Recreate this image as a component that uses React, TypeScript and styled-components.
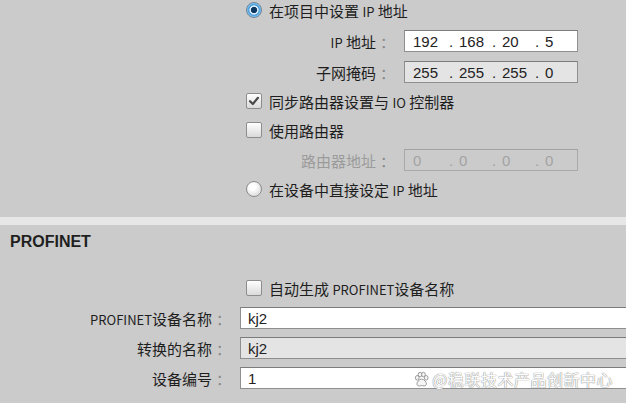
import styled, { createGlobalStyle } from "styled-components";

const GlobalStyle = createGlobalStyle`
  html, body {
    margin: 0;
    padding: 0;
    background: #cbcbcb;
    overflow: hidden;
  }
  body {
    font-family: "Noto Sans CJK SC", "Liberation Sans", sans-serif;
    font-size: 15px;
    color: #1e1e1e;
  }
`;

const Page = styled.div`
  position: relative;
  width: 626px;
  height: 403px;
  overflow: hidden;
  background: #cbcbcb;
`;

const AddressSection = styled.div`
  display: flex;
  flex-direction: column;
  margin-top: -5px;
  padding-bottom: 14px;
`;

const Row = styled.div<{ $h: number }>`
  display: flex;
  align-items: center;
  height: ${(p) => p.$h}px;
`;

const OptionRow = styled(Row)<{ $indent: number }>`
  padding-left: ${(p) => p.$indent}px;
  gap: 7px;
`;

const FieldRow = styled.div<{ $h: number; $label: number; $input: string }>`
  display: grid;
  grid-template-columns: ${(p) => p.$label}px ${(p) => p.$input};
  column-gap: 10px;
  align-items: center;
  height: ${(p) => p.$h}px;
`;

const Label = styled.div<{ $muted?: boolean }>`
  text-align: right;
  white-space: nowrap;
  color: ${(p) => (p.$muted ? "#9b9b9b" : "#1e1e1e")};
`;

const Colon = styled.span`
  display: inline-block;
  width: 14px;
  margin-left: 4px;
  text-align: left;
  color: #8a8a8a;
`;

const Latin = styled.span`
  font-size: 13px;
`;

const Radio = styled.span<{ $on?: boolean }>`
  box-sizing: border-box;
  width: 16px;
  height: 16px;
  border-radius: 50%;
  border: 1px solid ${(p) => (p.$on ? "#6d8499" : "#8c8c8c")};
  background: ${(p) =>
    p.$on
      ? "radial-gradient(circle at 50% 50%, #0c3963 0 2.8px, #e8f4ff 3.6px 4.2px, #3f97d9 5px, #8cc8f0 7px)"
      : "radial-gradient(circle at 40% 35%, #ffffff 0 3px, #e4e4e4 8px)"};
  flex: none;
`;

const Check = styled.span`
  box-sizing: border-box;
  width: 16px;
  height: 16px;
  border-radius: 2px;
  border: 1px solid #8d8d8d;
  background: linear-gradient(#ffffff, #dadada);
  display: flex;
  align-items: center;
  justify-content: center;
  flex: none;
`;

const Box = styled.div<{ $tone: "white" | "gray" | "off"; $bleed?: boolean }>`
  box-sizing: border-box;
  height: 22px;
  border: 1px solid ${(p) => (p.$tone === "off" ? "#a9a9a9" : "#8f8f8f")};
  border-top-color: ${(p) => (p.$tone === "off" ? "#a2a2a2" : "#7c7c7c")};
  background: ${(p) =>
    p.$tone === "white" ? "#ffffff" : p.$tone === "gray" ? "#e4e4e4" : "transparent"};
  color: ${(p) => (p.$tone === "off" ? "#a3a3a3" : "#222")};
  font-family: "Liberation Sans", "Noto Sans CJK SC", sans-serif;
  font-size: 15px;
  display: flex;
  align-items: center;
  padding-left: 7px;
  margin-right: ${(p) => (p.$bleed ? "-6px" : "0")};
`;

const IpBox = styled(Box)`
  display: grid;
  grid-template-columns: repeat(4, 1fr);
  padding-left: 0;
`;

const Octet = styled.span<{ $first?: boolean }>`
  display: flex;
  padding-left: ${(p) => (p.$first ? "8px" : "1px")};
  white-space: pre;
`;

const Dot = styled.span`
  width: 10px;
`;

const Band = styled.div`
  height: 8px;
  background: #e7e7e7;
`;

const SectionTitle = styled.div`
  height: 34px;
  display: flex;
  align-items: center;
  padding-left: 10px;
  font-family: "Liberation Sans", sans-serif;
  font-weight: 700;
  font-size: 16px;
  color: #1f1f1f;
`;

const NameSection = styled.div`
  display: flex;
  flex-direction: column;
  padding-top: 14px;
`;

const Watermark = styled.div`
  position: absolute;
  right: 13px;
  bottom: 12px;
  display: flex;
  align-items: center;
  gap: 2px;
  font-size: 16px;
  color: #fdfdfd;
  letter-spacing: 0.5px;
  text-shadow: 0 0 1px #8a8a8a, 0 0 1px #8a8a8a;
`;

const CheckMark = () => (
  <svg width="12" height="12" viewBox="0 0 12 12">
    <path d="M2 6.2 L4.8 9 L10 2.8" fill="none" stroke="#4a4a4a" strokeWidth="2.2" strokeLinecap="round" strokeLinejoin="round" />
  </svg>
);

const Paw = () => (
  <svg width="17" height="17" viewBox="0 0 20 20">
    <g fill="#f6f6f6" stroke="#8a8a8a" strokeWidth="1">
      <ellipse cx="5" cy="8" rx="2.2" ry="2.7" />
      <ellipse cx="8.3" cy="4.2" rx="2.2" ry="2.7" />
      <ellipse cx="12.3" cy="4.2" rx="2.2" ry="2.7" />
      <ellipse cx="15.5" cy="8" rx="2.2" ry="2.7" />
      <path d="M10.2 9.5c-3 0-5.6 3.6-5.6 5.7 0 1.6 1.3 2.4 2.7 2.4 1.2 0 1.9-.6 2.9-.6s1.7.6 2.9.6c1.4 0 2.7-.8 2.7-2.4 0-2.1-2.6-5.7-5.6-5.7z" />
    </g>
  </svg>
);

const IpField = ({ parts, tone }: { parts: string[]; tone: "white" | "gray" | "off" }) => (
  <IpBox $tone={tone}>
    {parts.map((v, i) => (
      <Octet key={i} $first={i === 0}>
        {i > 0 && <Dot>.</Dot>}
        {v}
      </Octet>
    ))}
  </IpBox>
);

export default function App() {
  return (
    <Page>
      <GlobalStyle />
      <AddressSection>
        <OptionRow $h={30} $indent={246}>
          <Radio $on />
          <span>在项目中设置 <Latin>IP</Latin> 地址</span>
        </OptionRow>
        <FieldRow $h={32} $label={394} $input="174px">
          <Label>
            <Latin>IP</Latin> 地址<Colon>：</Colon>
          </Label>
          <IpField parts={["192", "168", "20", "5"]} tone="white" />
        </FieldRow>
        <FieldRow $h={30} $label={394} $input="174px">
          <Label>
            子网掩码<Colon>：</Colon>
          </Label>
          <IpField parts={["255", "255", "255", "0"]} tone="gray" />
        </FieldRow>
        <OptionRow $h={28} $indent={246}>
          <Check>
            <CheckMark />
          </Check>
          <span>同步路由器设置与 <Latin>IO</Latin> 控制器</span>
        </OptionRow>
        <OptionRow $h={30} $indent={246}>
          <Check />
          <span>使用路由器</span>
        </OptionRow>
        <FieldRow $h={30} $label={394} $input="174px">
          <Label $muted>
            路由器地址<Colon>：</Colon>
          </Label>
          <IpField parts={["0", "0", "0", "0"]} tone="off" />
        </FieldRow>
        <OptionRow $h={28} $indent={246}>
          <Radio />
          <span>在设备中直接设定 <Latin>IP</Latin> 地址</span>
        </OptionRow>
      </AddressSection>

      <Band />
      <SectionTitle>PROFINET</SectionTitle>

      <NameSection>
        <OptionRow $h={30} $indent={246}>
          <Check />
          <span>自动生成 <Latin>PROFINET</Latin>设备名称</span>
        </OptionRow>
        <FieldRow $h={30} $label={230} $input="1fr">
          <Label>
            <Latin>PROFINET</Latin>设备名称<Colon>：</Colon>
          </Label>
          <Box $tone="white" $bleed>kj2</Box>
        </FieldRow>
        <FieldRow $h={30} $label={230} $input="1fr">
          <Label>
            转换的名称<Colon>：</Colon>
          </Label>
          <Box $tone="gray" $bleed>kj2</Box>
        </FieldRow>
        <FieldRow $h={30} $label={230} $input="1fr">
          <Label>
            设备编号<Colon>：</Colon>
          </Label>
          <Box $tone="white" $bleed>1</Box>
        </FieldRow>
      </NameSection>

      <Watermark>
        <Paw />
        <span>@稳联技术产品创新中心</span>
      </Watermark>
    </Page>
  );
}
